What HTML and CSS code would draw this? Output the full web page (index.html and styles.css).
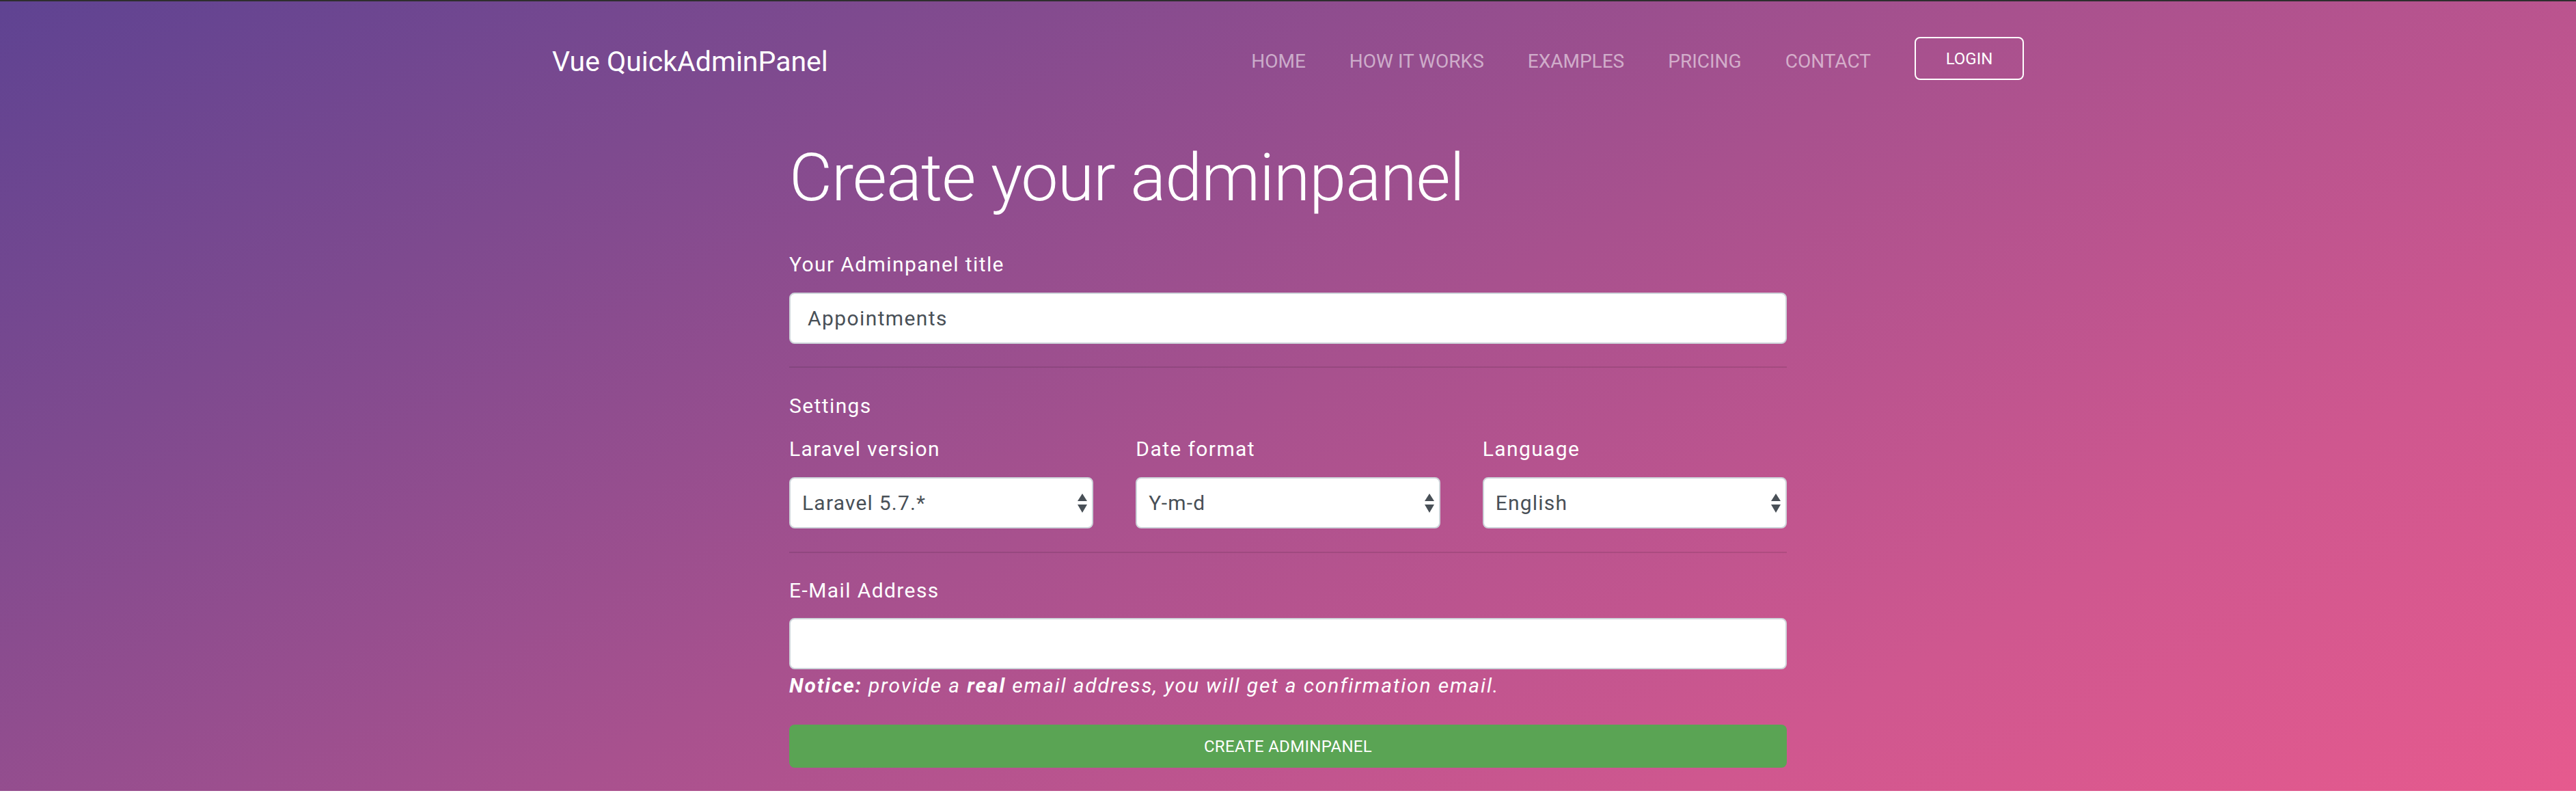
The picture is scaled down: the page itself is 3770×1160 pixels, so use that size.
FILE: index.html
```html
<!DOCTYPE html>
<html lang="en">
<head>
<meta charset="utf-8">
<title>Vue QuickAdminPanel</title>
<link rel="stylesheet" href="styles.css">
</head>
<body>
<div class="hero">
  <nav class="navbar">
    <a class="brand" href="#">Vue QuickAdminPanel</a>
    <ul class="nav-links">
      <li><a href="#">HOME</a></li>
      <li><a href="#">HOW IT WORKS</a></li>
      <li><a href="#">EXAMPLES</a></li>
      <li><a href="#">PRICING</a></li>
      <li><a href="#">CONTACT</a></li>
    </ul>
    <a class="login" href="#">LOGIN</a>
  </nav>

  <main class="form-wrap">
    <h1 class="title">Create your adminpanel</h1>

    <label class="label lbl-title">Your Adminpanel title</label>
    <div class="input input-title">Appointments</div>

    <div class="divider div-1"></div>

    <div class="label lbl-settings">Settings</div>
    <div class="settings-grid">
      <div class="field">
        <label class="label">Laravel version</label>
        <div class="select"><span>Laravel 5.7.*</span>
          <svg class="arrows" width="14" height="28" viewBox="0 0 14 28"><path d="M7 0 L14 11 L0 11 Z M0 16 L14 16 L7 28 Z" fill="#495057"/></svg>
        </div>
      </div>
      <div class="field">
        <label class="label">Date format</label>
        <div class="select"><span>Y-m-d</span>
          <svg class="arrows" width="14" height="28" viewBox="0 0 14 28"><path d="M7 0 L14 11 L0 11 Z M0 16 L14 16 L7 28 Z" fill="#495057"/></svg>
        </div>
      </div>
      <div class="field">
        <label class="label">Language</label>
        <div class="select"><span>English</span>
          <svg class="arrows" width="14" height="28" viewBox="0 0 14 28"><path d="M7 0 L14 11 L0 11 Z M0 16 L14 16 L7 28 Z" fill="#495057"/></svg>
        </div>
      </div>
    </div>

    <div class="divider div-2"></div>

    <label class="label lbl-email">E-Mail Address</label>
    <div class="input input-email"></div>
    <p class="notice"><b>Notice:</b> provide a <b>real</b> email address, you will get a confirmation email.</p>

    <button class="create-btn">CREATE ADMINPANEL</button>
  </main>
</div>
</body>
</html>
```

FILE: styles.css
```css
* { box-sizing: border-box; }

html, body {
  margin: 0;
  padding: 0;
  background: #ffffff;
  font-family: Roboto, "Liberation Sans", Arial, sans-serif;
}

.hero {
  height: 1157px;
  border-top: 2px solid #2e2e2e;
  background: linear-gradient(152deg, #5f4392 0%, #7e4a8f 22%, #a8518e 50%, #cf578f 78%, #e65a8e 100%);
  color: #ffffff;
  overflow: hidden;
}

/* NAVBAR */
.navbar {
  width: 2154px;
  margin: 52px auto 0;
  height: 63px;
  display: flex;
  align-items: center;
}

.brand {
  color: #ffffff;
  text-decoration: none;
  font-size: 41px;
  line-height: 40px;
  padding-top: 8px;
  margin-right: auto;
}

.nav-links {
  list-style: none;
  margin: 0;
  padding: 0;
  display: flex;
  align-items: center;
  padding-top: 8px;
}

.nav-links a {
  display: block;
  padding: 0 32px;
  color: rgba(255, 255, 255, 0.55);
  text-decoration: none;
  font-size: 28px;
  line-height: 30px;
}

.login {
  margin-left: 32px;
  width: 160px;
  height: 63px;
  border: 2px solid #ffffff;
  border-radius: 8px;
  color: #ffffff;
  text-decoration: none;
  font-size: 24px;
  display: flex;
  align-items: center;
  justify-content: center;
}

/* FORM */
.form-wrap {
  width: 1460px;
  margin: 0 auto;
}

.title {
  margin: 85px 0 0;
  font-size: 97px;
  line-height: 117px;
  font-weight: 300;
  letter-spacing: -1px;
}

.label {
  display: block;
  font-size: 30px;
  line-height: 36px;
  letter-spacing: 1.4px;
  color: #ffffff;
}

.lbl-title { margin-top: 50px; }

.input {
  height: 75px;
  background: #ffffff;
  border: 2px solid #ced4da;
  border-radius: 8px;
  color: #495057;
  font-size: 30px;
  line-height: 71px;
  letter-spacing: 1.4px;
  padding: 0 25px;
}

.input-title { margin-top: 23px; }

.divider {
  height: 2px;
  background: rgba(0, 0, 0, 0.1);
}

.div-1 { margin-top: 33px; }

.lbl-settings { margin-top: 38px; }

.settings-grid {
  margin-top: 27px;
  display: grid;
  grid-template-columns: 1fr 1fr 1fr;
  column-gap: 62px;
}

.select {
  margin-top: 23px;
  height: 75px;
  background: #ffffff;
  border: 2px solid #ced4da;
  border-radius: 8px;
  color: #495057;
  font-size: 30px;
  letter-spacing: 1.2px;
  padding: 0 7px 0 17px;
  display: flex;
  align-items: center;
  justify-content: space-between;
}

.arrows { display: block; }

.div-2 { margin-top: 34px; }

.lbl-email { margin-top: 37px; }

.input-email { margin-top: 22px; }

.notice {
  margin: 6px 0 0;
  font-size: 30px;
  line-height: 36px;
  font-style: italic;
  letter-spacing: 1.85px;
}

.notice b { font-weight: 700; }

.create-btn {
  display: block;
  width: 100%;
  height: 63px;
  margin-top: 39px;
  background: #5aa454;
  border: none;
  border-radius: 8px;
  color: #ffffff;
  font-family: Roboto, "Liberation Sans", Arial, sans-serif;
  font-size: 24px;
  letter-spacing: 0.3px;
  padding: 0;
}
```
